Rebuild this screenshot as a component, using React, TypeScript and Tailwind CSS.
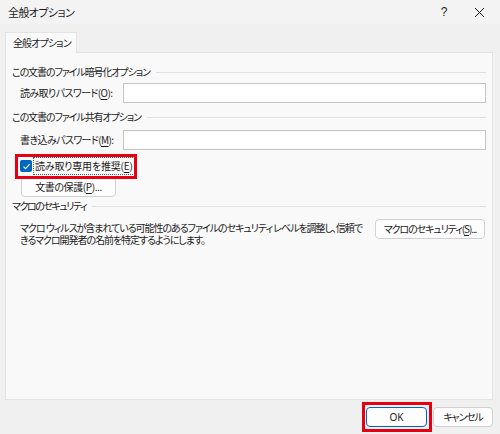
import React from "react";

const U = ({ c }: { c: string }) => <span className="underline underline-offset-2">{c}</span>;

function GroupLabel({ text, track }: { text: string; track: string }) {
  return (
    <div className="flex items-center h-[16px]">
      <span className={track}>{text}</span>
      <div className="flex-1 h-px bg-[#e0e0e0] ml-[6px]" />
    </div>
  );
}

export default function App() {
  return (
    <div
      className="w-[500px] h-[434px] bg-[#f0f0f0] flex flex-col text-[10px] tracking-[-0.4px] leading-[16px] whitespace-nowrap text-[#1b1b1b] [font-feature-settings:'palt']"
      style={{ fontFamily: '"Noto Sans CJK JP", "Noto Sans", sans-serif' }}
    >
      {/* title bar */}
      <div className="h-[24px] bg-[#f3f3f3] flex items-center pl-[8px] pr-[14px]">
        <span className="text-[11px] tracking-[-0.6px]">全般オプション</span>
        <div className="flex-1" />
        <span className="text-[12px] mr-[27px]" style={{ fontFamily: '"Liberation Sans", sans-serif' }}>?</span>
        <svg width="11" height="11" viewBox="0 0 11 11" className="mr-[1px]">
          <path d="M1 1 L10 10 M10 1 L1 10" stroke="#1b1b1b" strokeWidth="1" />
        </svg>
      </div>

      {/* body */}
      <div className="pl-[5px] pt-[8px] flex flex-col">
        <div className="w-[72px] h-[21px] bg-[#f9f9f9] border border-b-0 border-[#e3e3e3] flex items-center pl-[7px] relative z-10 -mb-px tracking-[-0.9px]">
          全般オプション
        </div>
        <div className="w-[488px] h-[348px] bg-[#f9f9f9] border border-[#e3e3e3] pl-[6px] pr-[6px] pt-[11px] flex flex-col">
          <GroupLabel text="この文書のファイル暗号化オプション" track="tracking-[-1.1px]" />
          <div className="flex items-center mt-[3px] pl-[8px]">
            <span className="w-[103px] tracking-[-0.6px]">
              読み取りパスワード(<U c="O" />):
            </span>
            <div className="flex-1 h-[20px] bg-white border border-[#c4c4c4]" />
          </div>

          <div className="mt-[6px]">
            <GroupLabel text="この文書のファイル共有オプション" track="tracking-[-1.1px]" />
          </div>
          <div className="flex items-center mt-[5px] pl-[8px]">
            <span className="w-[103px] tracking-[-0.6px]">
              書き込みパスワード(<U c="M" />):
            </span>
            <div className="flex-1 h-[20px] bg-white border border-[#c4c4c4]" />
          </div>

          <div className="relative mt-[4px] ml-[4px] h-[24px] flex items-center pl-[4px]">
            <div className="w-[12px] h-[12px] rounded-[2px] bg-[#0067c0] flex items-center justify-center">
              <svg width="9" height="9" viewBox="0 0 9 9">
                <path d="M1.5 4.6 L3.6 6.6 L7.6 2.2" stroke="white" strokeWidth="1.1" fill="none" />
              </svg>
            </div>
            <span className="ml-[1px] px-[1px] border border-dotted border-[#555] leading-[16px] tracking-[-0.2px]">
              読み取り専用を推奨(<U c="E" />)
            </span>
            <div className="absolute left-[-1px] top-0 w-[122px] h-[25px] border-[3px] border-[#e60012] pointer-events-none" />
          </div>

          <div className="ml-[9px] mt-[-1px] w-[95px] h-[20px] bg-[#fdfdfd] border border-[#d1d1d1] rounded-[4px] flex items-center justify-center">
            <span>文書の保護(<U c="P" />)...</span>
          </div>

          <div className="mt-[1px]">
            <GroupLabel text="マクロのセキュリティ" track="tracking-[-1.5px]" />
          </div>
          <div className="flex items-start mt-[8px] pl-[8px]">
            <div className="flex flex-col tracking-[-1.05px]">
              <span className="leading-[12px]">マクロ ウィルスが含まれている可能性のあるファイルのセキュリティ レベルを調整し、信頼で</span>
              <span className="leading-[12px]">きるマクロ開発者の名前を特定するようにします。</span>
            </div>
            <div className="flex-1" />
            <div className="mt-[-3px] w-[110px] h-[20px] bg-[#fdfdfd] border border-[#d1d1d1] rounded-[4px] flex items-center justify-center mr-[1px] tracking-[-1.1px]">
              <span>マクロのセキュリティ(<U c="S" />)...</span>
            </div>
          </div>
        </div>
      </div>

      {/* footer */}
      <div className="flex justify-end pr-[7px] mt-[7px]">
        <div className="relative">
          <div className="w-[61px] h-[20px] bg-[#fdfdfd] border border-[#0067c0] rounded-[4px] flex items-center justify-center tracking-normal" style={{ fontFamily: '"Noto Sans", sans-serif' }}>
            OK
          </div>
          <div className="absolute left-[-4px] top-[-5px] w-[70px] h-[30px] border-[3px] border-[#e60012] pointer-events-none" />
        </div>
        <div className="ml-[6px] w-[60px] h-[20px] bg-[#fdfdfd] border border-[#d1d1d1] rounded-[4px] flex items-center justify-center tracking-[-1.2px]">
          キャンセル
        </div>
      </div>
    </div>
  );
}
